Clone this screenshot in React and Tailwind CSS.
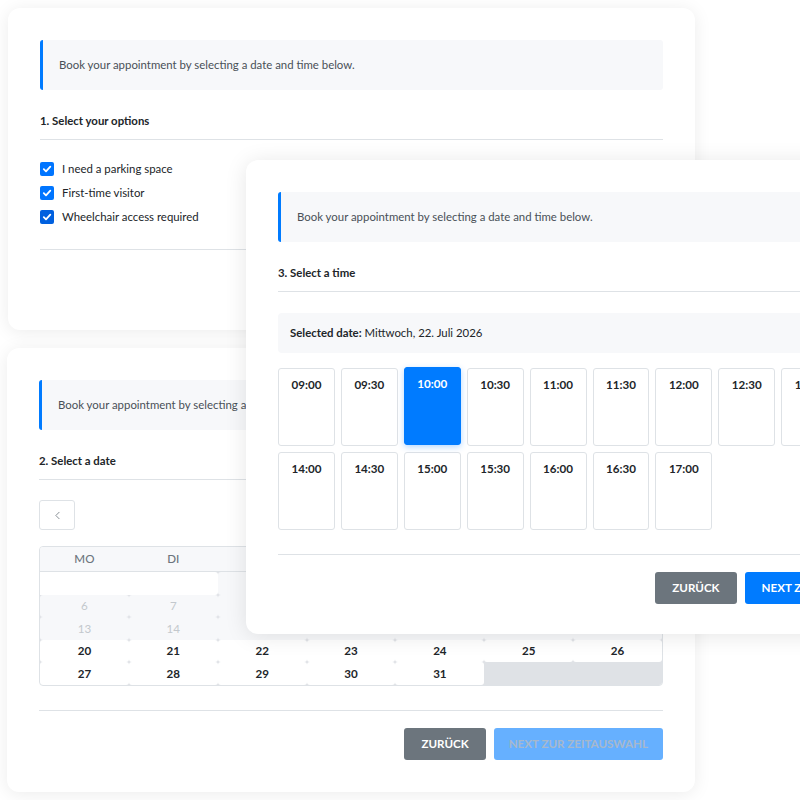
import React from 'react';
import { ChevronLeft } from 'lucide-react';

const font = { fontFamily: 'Lato, "Noto Sans", sans-serif' };

function Info() {
  return (
    <div className="h-[50px] flex items-center bg-[#f7f8fa] border-l-[3px] border-[#007bff] rounded-[3px] pl-4 text-[11.4px] text-[#495057]">
      Book your appointment by selecting a date and time below.
    </div>
  );
}

function Heading({ children }) {
  return (
    <div className="mt-[22px] pb-[9px] border-b border-[#dee2e6] text-[11.4px] leading-[18px] font-bold text-[#212529]">
      {children}
    </div>
  );
}

function Check({ label, dark }) {
  return (
    <div className="h-6 flex items-center gap-2">
      <span className={`w-[14px] h-[14px] rounded-[2px] flex items-center justify-center ${dark ? 'bg-[#0060df]' : 'bg-[#0075ff]'}`}>
        <svg width="10" height="10" viewBox="0 0 10 10" fill="none">
          <path d="M1.8 5.2 L4 7.3 L8.3 2.6" stroke="white" strokeWidth="1.8" strokeLinecap="round" strokeLinejoin="round" />
        </svg>
      </span>
      <span className="text-[11.4px] text-[#212529]">{label}</span>
    </div>
  );
}

function Buttons({ next, disabled, wide }) {
  return (
    <div className="mt-[17px] flex justify-end gap-2">
      <button className="h-[32px] px-[17px] rounded-[3px] bg-[#6c757d] text-white text-[11.6px] font-bold uppercase">
        Zurück
      </button>
      <button
        className={`h-[32px] rounded-[3px] text-[11.6px] font-bold uppercase whitespace-nowrap ${wide ? 'px-[17px]' : 'px-[15px]'} ${
          disabled ? 'bg-[#66b0ff] text-[#a6b8cc]' : 'bg-[#007bff] text-white'
        }`}
      >
        {next}
      </button>
    </div>
  );
}

const days = ['Mo', 'Di', 'Mi', 'Do', 'Fr', 'Sa', 'So'];

function Calendar() {
  const cells = [];
  cells.push({ kind: 'blank' }, { kind: 'blank2' });
  for (let d = 1; d <= 31; d++) cells.push({ kind: d < 20 ? 'past' : 'day', d });
  while (cells.length < 35) cells.push({ kind: 'end' });
  return (
    <div className="mt-4 rounded-[4px] border border-[#dee2e6] overflow-hidden">
      <div className="grid grid-cols-7 h-[25px] bg-[#f7f8fa] border-b border-[#dee2e6]">
        {days.map((d) => (
          <div key={d} className="flex items-center justify-center text-[11.6px] font-medium uppercase text-[#6c757d]">
            {d}
          </div>
        ))}
      </div>
      <div className="grid grid-cols-7 bg-[#dfe2e6]">
        {cells.map((c, i) => (
          <div
            key={i}
            className={`h-[22.6px] flex items-center justify-center text-[11.6px] ${
              c.kind === 'blank'
                ? 'bg-white'
                : c.kind === 'blank2'
                ? 'bg-white rounded-r-[3px]'
                : c.kind === 'past'
                ? 'bg-[#f7f8fa] text-[#c3c8cd] rounded-[3px]'
                : c.kind === 'day'
                ? 'bg-white font-bold text-[#212529] rounded-[3px]'
                : 'bg-transparent'
            }`}
          >
            {c.d}
          </div>
        ))}
      </div>
    </div>
  );
}

const times = [
  '09:00', '09:30', '10:00', '10:30', '11:00', '11:30', '12:00', '12:30', '13:00', '13:30',
  '14:00', '14:30', '15:00', '15:30', '16:00', '16:30', '17:00',
];

export default function App() {
  return (
    <div className="relative w-[800px] h-[800px] overflow-hidden bg-white" style={font}>
      {/* card 1 */}
      <div className="absolute left-[8px] top-[8px] w-[687px] h-[322px] bg-white rounded-xl shadow-[0_2px_18px_rgba(0,0,0,0.08)] p-8">
        <Info />
        <Heading>1. Select your options</Heading>
        <div className="mt-[17px]">
          <Check label="I need a parking space" />
          <Check label="First-time visitor" />
          <Check label="Wheelchair access required" dark />
        </div>
        <div className="mt-5 border-t border-[#dee2e6]" />
        <Buttons next="Next zur Datumsauswahl" />
      </div>

      {/* card 2 */}
      <div className="absolute left-[7px] top-[348px] w-[688px] h-[444px] bg-white rounded-xl shadow-[0_2px_18px_rgba(0,0,0,0.08)] p-8">
        <Info />
        <Heading>2. Select a date</Heading>
        <button className="mt-[20px] w-9 h-[30px] border border-[#dee2e6] rounded-[3px] flex items-center justify-center text-[#6c757d]">
          <ChevronLeft size={13} strokeWidth={1.5} />
        </button>
        <Calendar />
        <div className="mt-6 border-t border-[#dee2e6]" />
        <Buttons next="Next zur Zeitauswahl" disabled />
      </div>

      {/* card 3 */}
      <div className="absolute left-[246px] top-[160px] w-[687px] h-[474px] bg-white rounded-xl shadow-[0_2px_22px_rgba(0,0,0,0.1)] p-8">
        <Info />
        <Heading>3. Select a time</Heading>
        <div className="mt-[21px] h-10 flex items-center bg-[#f7f8fa] rounded-[4px] px-3 text-[11.4px] text-[#212529]">
          <span className="font-bold">Selected date:</span>&nbsp;Mittwoch, 22. Juli 2026
        </div>
        <div className="mt-[15px] grid grid-cols-10 gap-[6px]">
          {times.map((t) => {
            const sel = t === '10:00';
            return (
              <div
                key={t}
                className={`h-[78px] rounded-[3px] border-[1.5px] pt-[7px] text-center text-[11.6px] font-bold ${
                  sel
                    ? 'bg-[#007bff] border-[#007bff] text-white -translate-y-px shadow-[0_2px_6px_rgba(0,123,255,0.3)]'
                    : 'bg-white border-[#dee2e6] text-[#212529]'
                }`}
              >
                {t}
              </div>
            );
          })}
        </div>
        <div className="mt-6 border-t border-[#dee2e6]" />
        <Buttons next="Next zur Übersicht" wide />
      </div>
    </div>
  );
}
